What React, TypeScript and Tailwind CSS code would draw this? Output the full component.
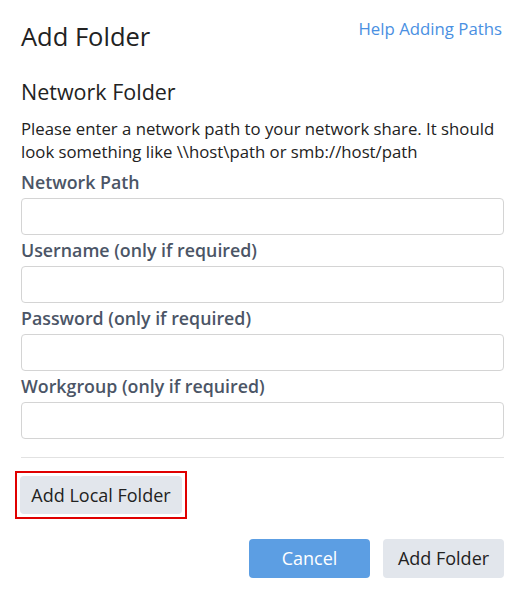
import React from 'react';

const fields = [
  'Network Path',
  'Username (only if required)',
  'Password (only if required)',
  'Workgroup (only if required)',
];

export default function App() {
  return (
    <div className="w-[525px] h-[600px] bg-white px-[21px] text-[#222] font-['Open_Sans',sans-serif]">
      <div className="flex items-start justify-between pt-[19px]">
        <h1 className="text-[25.5px] leading-[34px]">Add Folder</h1>
        <a className="text-[16.8px] leading-[22px] text-[#4a90e2] mr-[2px] -mt-[1px]">Help Adding Paths</a>
      </div>

      <h2 className="mt-[25px] text-[21.5px] leading-[28px]">Network Folder</h2>
      <p className="mt-[11px] text-[16.75px] leading-[23px]">
        Please enter a network path to your network share. It should look something like \\host\path or smb://host/path
      </p>

      <div className="mt-[4px] flex flex-col">
        {fields.map((f) => (
          <div key={f} className="flex flex-col">
            <label className="text-[17.8px] leading-[31px] font-semibold text-[#4b5566]">{f}</label>
            <input className="h-[37px] rounded-[4px] border border-[#d4d4d4] px-2 outline-none" />
          </div>
        ))}
      </div>

      <div className="mt-[18px] h-px bg-[#e2e2e2]" />

      <div className="mt-[13px] -ml-[6px] inline-block border-2 border-[#e00000] p-[3px]">
        <button className="block h-[38px] w-[162px] rounded-[4px] bg-[#e2e6ec] text-[18px] text-[#222]">
          Add Local Folder
        </button>
      </div>

      <div className="mt-[20px] flex justify-end gap-[13px]">
        <button className="h-[39px] w-[121px] rounded-[4px] bg-[#5c9ee3] text-white text-[18px]">Cancel</button>
        <button className="h-[39px] w-[121px] rounded-[4px] bg-[#e2e6ec] text-[#222] text-[18px]">Add Folder</button>
      </div>
    </div>
  );
}
